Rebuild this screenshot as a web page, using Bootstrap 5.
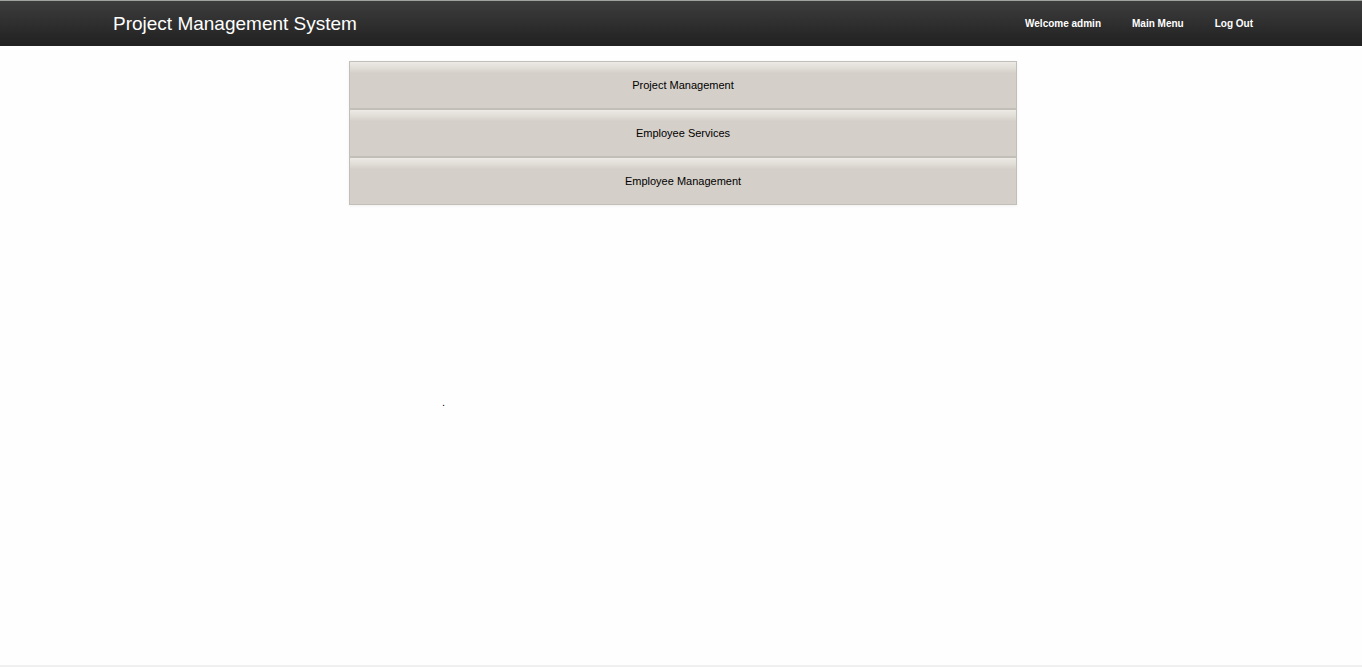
<!DOCTYPE html>
<html lang="en">
<head>
<meta charset="utf-8">
<meta name="viewport" content="width=device-width, initial-scale=1">
<title>Project Management System</title>
<link rel="stylesheet" href="https://cdn.jsdelivr.net/npm/bootstrap@5.3.0/dist/css/bootstrap.min.css">
<style>
  body {
    font-family: "Liberation Sans", Arial, sans-serif;
    font-size: 11px;
    line-height: 16px;
    color: #000;
    background: #fefefe;
  }
  .shell { padding-left: 4px; }
  .topbar {
    min-height: 46px;
    padding-top: 5px;
    border-top: 1px solid #a0a2a0;
    border-bottom: 4px solid #222;
    background: linear-gradient(#3d3d3d, #232323);
  }
  .site-title { font-size: 19px; line-height: 24px; }
  .top-links { gap: 31px; font-size: 10px; }
  .menu-stack {
    max-width: 668px;
    margin-top: 15px;
    box-shadow: 0 1px 3px rgba(0, 0, 0, .06);
  }
  .menu-item {
    padding: 15px;
    border: 1px solid #c2beb8;
    color: #000;
    background: linear-gradient(#edeae6, #d8d4cd 10px, #d4cfc8 11px);
  }
  .menu-item:hover { color: #333; }
  .content-note { max-width: 668px; padding: 189px 93px 0; }
  .page-end { height: 2px; background: #f0f0f0; }
</style>
</head>
<body>
<div class="d-flex flex-column min-vh-100">
  <header class="topbar shell d-flex">
    <div class="container px-0 d-flex align-items-center justify-content-between">
      <a class="site-title text-white text-decoration-none" href="#">Project Management System</a>
      <nav class="top-links d-flex fw-bold" aria-label="Account">
        <a class="text-white text-decoration-none" href="#">Welcome admin</a>
        <a class="text-white text-decoration-none" href="#">Main Menu</a>
        <a class="text-white text-decoration-none" href="#">Log Out</a>
      </nav>
    </div>
  </header>
  <main class="shell flex-grow-1">
    <nav class="menu-stack mx-auto d-flex flex-column text-center" aria-label="Main menu">
      <a class="menu-item text-decoration-none" href="#">Project Management</a>
      <a class="menu-item text-decoration-none" href="#">Employee Services</a>
      <a class="menu-item text-decoration-none" href="#">Employee Management</a>
    </nav>
    <p class="content-note mx-auto mb-0">.</p>
  </main>
  <footer class="page-end"></footer>
</div>
<script src="https://cdn.jsdelivr.net/npm/bootstrap@5.3.0/dist/js/bootstrap.bundle.min.js"></script>
</body>
</html>
